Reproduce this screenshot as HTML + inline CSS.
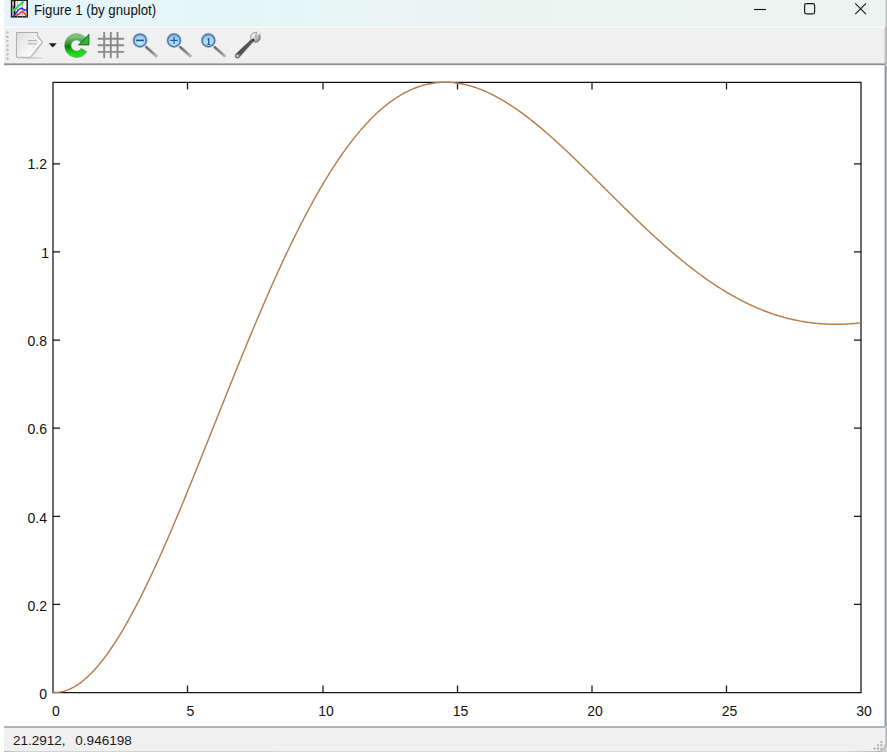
<!DOCTYPE html>
<html><head><meta charset="utf-8">
<style>
html,body{margin:0;padding:0;width:887px;height:752px;overflow:hidden;background:#fff;font-family:"Liberation Sans",sans-serif;}
.abs{position:absolute;}
#title{left:4px;top:0;width:881px;height:26px;background:linear-gradient(90deg,#e6f4fa 0%,#e5f6f7 30%,#e9f5f3 45%,#ebf4f1 80%,#ecf4f1 100%);}
#trow26{left:4px;top:26px;width:881px;height:1px;background:#f2f7f6;}
#ttext{left:33.7px;top:0.6px;font-size:14.4px;line-height:18px;color:#111;white-space:nowrap;transform:scaleX(0.92);transform-origin:0 0;}
#toolbar{left:4px;top:27px;width:880px;height:36px;background:#f0f0f0;border-top:1px solid #fafafa;box-sizing:border-box;}
#tbline1{left:4px;top:63px;width:881px;height:1px;background:#b4b4b4;}
#tbline2{left:4px;top:64px;width:881px;height:1px;background:#8a8e96;}
#tbline3{left:4px;top:65px;width:881px;height:1px;background:#e6e6e8;}
#rborder{left:885px;top:66px;width:1px;height:660px;background:#8c9098;}
#rb884{left:884px;top:66px;width:1px;height:660px;background:#d2d4d8;}
#rbtb{left:884px;top:27px;width:1px;height:36px;background:#dcdcdc;}
#rbtb2{left:885px;top:27px;width:1px;height:39px;background:#bcbcbc;}
#rbst{left:885px;top:726px;width:1px;height:20px;background:#d0d0d0;}
#rbti{left:885px;top:0;width:1px;height:27px;background:#d4d8d8;}
#outside{left:886px;top:0;width:1px;height:752px;background:linear-gradient(180deg,#c0c0c0 0px,#c0c0c0 27px,#bcbcbc 27px,#bcbcbc 66px,#b4b8b8 66px,#b4b8b8 726px,#b0b0b0 726px);}
#status{left:4px;top:726px;width:881px;height:25px;background:#f0f0f0;border-top:2px solid #b0b4b9;box-sizing:border-box;}
#stext{left:13px;top:733px;font-size:13.5px;color:#1a1a1a;white-space:nowrap;}
#bborder{left:4px;top:751px;width:882px;height:1px;background:linear-gradient(90deg,#b4b8bc 0px,#d0d2d4 14px,#d8d8d8 40%,#d8d8d8 96%,#b0b4b8 100%);}
.lbl{position:absolute;font-size:14px;color:#111;white-space:nowrap;line-height:15px;}
.xl{width:60px;text-align:center;}
.yl{width:47px;text-align:right;}
</style></head><body>
<div id="outside" class="abs"></div>
<div id="title" class="abs"></div><div id="trow26" class="abs"></div>
<svg class="abs" style="left:0;top:0" width="30" height="20">
 <rect x="11.6" y="0.2" width="15.6" height="16.6" fill="#f4f4f4" stroke="#1a1a1a" stroke-width="1.5"/>
 <path d="M17.5 1V16.5M22.5 1V16.5M12 13.8H27" stroke="#b0b0b0" stroke-width="1" fill="none"/>
 <path d="M12.5 6Q13.5 8 14.8 9.5" stroke="#e03030" stroke-width="1.5" fill="none"/>
 <path d="M14.5 0.5V16.8" stroke="#000" stroke-width="1.6"/>
 <path d="M15.5 14.5Q18 16 20 13Q22 10.5 24 12.5Q25.5 14 26.5 16.5" stroke="#f04040" stroke-width="1.6" fill="none"/>
 <path d="M12.3 11.7L23.6 1.3" stroke="#30dd50" stroke-width="2.2" fill="none"/>
 <path d="M13.5 16.6Q16 12 19.5 9Q21.5 7.5 23.5 9.5Q25 11 27 9.2" stroke="#3030f0" stroke-width="1.5" fill="none"/>
</svg>
<div id="ttext" class="abs">Figure 1 (by gnuplot)</div>
<svg class="abs" style="left:0;top:0" width="887" height="27">
 <path d="M754 9.5H766" stroke="#111" stroke-width="1.1"/>
 <rect x="804.6" y="3.6" width="10" height="10.2" rx="1.8" fill="none" stroke="#1a1a1a" stroke-width="1.2"/>
 <path d="M855.2 3.4L866 14.2M866 3.4L855.2 14.2" stroke="#1a1a1a" stroke-width="1.15"/>
</svg>
<div id="toolbar" class="abs"></div>
<div id="tbline1" class="abs"></div>
<div id="tbline2" class="abs"></div>
<div id="tbline3" class="abs"></div>
<div id="rborder" class="abs"></div><div id="rb884" class="abs"></div><div id="rbtb" class="abs"></div><div id="rbtb2" class="abs"></div><div id="rbst" class="abs"></div><div id="rbti" class="abs"></div>
<svg class="abs" style="left:0;top:0" width="270" height="64">

<defs>
 <radialGradient id="lensg" cx="0.5" cy="0.62" r="0.6"><stop offset="0" stop-color="#c8eefa"/><stop offset="0.65" stop-color="#98d6f0"/><stop offset="1" stop-color="#6aa6d8"/></radialGradient>
 <linearGradient id="hdl" x1="0" y1="0" x2="1" y2="1"><stop offset="0" stop-color="#6a6a6a"/><stop offset="0.6" stop-color="#888"/><stop offset="1" stop-color="#b4b4b4"/></linearGradient>
 <linearGradient id="pageg" x1="0" y1="0" x2="1" y2="1"><stop offset="0" stop-color="#dedede"/><stop offset="0.6" stop-color="#f6f6f6"/><stop offset="1" stop-color="#ffffff"/></linearGradient>
 <linearGradient id="greeng" x1="0" y1="0" x2="0" y2="1"><stop offset="0" stop-color="#7cc27c"/><stop offset="0.35" stop-color="#3a9a3a"/><stop offset="0.55" stop-color="#0c7c0c"/><stop offset="0.8" stop-color="#12b812"/><stop offset="1" stop-color="#1ee01e"/></linearGradient>
 <linearGradient id="wrg" x1="0" y1="0" x2="1" y2="1"><stop offset="0" stop-color="#333"/><stop offset="0.45" stop-color="#4a4a4a"/><stop offset="1" stop-color="#a8a8a8"/></linearGradient>
</defs>
<rect x="6.5" y="31.5" width="2" height="2" fill="#a6a6a6"/><rect x="7.3" y="32.3" width="1" height="1" fill="#fff" opacity=".6"/><rect x="6.5" y="35.9" width="2" height="2" fill="#a6a6a6"/><rect x="7.3" y="36.7" width="1" height="1" fill="#fff" opacity=".6"/><rect x="6.5" y="40.2" width="2" height="2" fill="#a6a6a6"/><rect x="7.3" y="41.0" width="1" height="1" fill="#fff" opacity=".6"/><rect x="6.5" y="44.6" width="2" height="2" fill="#a6a6a6"/><rect x="7.3" y="45.4" width="1" height="1" fill="#fff" opacity=".6"/><rect x="6.5" y="49.1" width="2" height="2" fill="#a6a6a6"/><rect x="7.3" y="49.9" width="1" height="1" fill="#fff" opacity=".6"/><rect x="6.5" y="53.4" width="2" height="2" fill="#a6a6a6"/><rect x="7.3" y="54.2" width="1" height="1" fill="#fff" opacity=".6"/><rect x="6.5" y="57.6" width="2" height="2" fill="#a6a6a6"/><rect x="7.3" y="58.4" width="1" height="1" fill="#fff" opacity=".6"/>
<ellipse cx="30" cy="58" rx="13" ry="1.2" fill="#d0d0d0" opacity=".8"/>
<path d="M16.5 32.5H37.5V35.2L42.5 42.3L36.5 50.3L30.5 57.3H16.5Z" fill="url(#pageg)" stroke="#b0b0b0" stroke-width="1.1"/>
<path d="M33.6 35.6L40.2 42.3L33.6 49.2" fill="none" stroke="#c8c8c8" stroke-width="3.4"/>
<path d="M33.6 35.6L40.2 42.3L33.6 49.2" fill="none" stroke="#fff" stroke-width="2"/>
<path d="M28 40.6H36.5M28 43.9H36" stroke="#b4b4b4" stroke-width="1.1"/>
<path d="M30.8 56.8L36.2 50.6" fill="none" stroke="#c4c4c4" stroke-width="1.6"/>
<path d="M48.8 43.2H56.8L52.8 47.6Z" fill="#1e1e1e"/>
<linearGradient id="tailg" x1="78" y1="0" x2="87" y2="0" gradientUnits="userSpaceOnUse"><stop offset="0" stop-color="#22d022" stop-opacity="1"/><stop offset="1" stop-color="#70d070" stop-opacity="0.1"/></linearGradient>
<path d="M84 50A8.7 8.7 0 1 1 84.7 42.6" fill="none" stroke="#0d6a0d" stroke-width="6.9" opacity=".5"/>
<path d="M84 50A8.7 8.7 0 1 1 84.7 42.6" fill="none" stroke="url(#greeng)" stroke-width="6.1"/>
<path d="M76.5 54.3A8.7 8.7 0 0 0 84.6 49.6" fill="none" stroke="url(#tailg)" stroke-width="6.3"/>
<path d="M78.4 44.9L89 34.3V44.9Z" fill="#2f9a2f" stroke="#146e14" stroke-width=".8" stroke-linejoin="round"/>
<path d="M81.2 44.1L88.2 36.8V44.1Z" fill="#3cb43c"/>
<g stroke="#8a8a8a" stroke-width="1.9"><path d="M104.2 32V58.3M110.8 32V58.3M117.5 32V58.3M97.8 38.8H124.1M97.8 45.2H124.1M97.8 51.9H124.1"/></g>
<g>
 <path d="M146.3 47.199999999999996L156.3 56.0" stroke="#c4c4c4" stroke-width="3.4" stroke-linecap="round" opacity=".8"/>
 <path d="M146.3 47.199999999999996L156.1 55.8" stroke="url(#hdl)" stroke-width="2.2" stroke-linecap="round"/>
 <circle cx="140" cy="40.4" r="7.6" fill="#a8aeb6" opacity=".6"/>
 <circle cx="140" cy="40.4" r="6.3" fill="url(#lensg)" stroke="#5272aa" stroke-width="1.4"/>
 <path d="M136.2 40.4H143.8" stroke="#1d4f9e" stroke-width="1.6"/>
</g>
<g>
 <path d="M180.3 47.199999999999996L190.3 56.0" stroke="#c4c4c4" stroke-width="3.4" stroke-linecap="round" opacity=".8"/>
 <path d="M180.3 47.199999999999996L190.1 55.8" stroke="url(#hdl)" stroke-width="2.2" stroke-linecap="round"/>
 <circle cx="174" cy="40.4" r="7.6" fill="#a8aeb6" opacity=".6"/>
 <circle cx="174" cy="40.4" r="6.3" fill="url(#lensg)" stroke="#5272aa" stroke-width="1.4"/>
 <path d="M170.3 40.4H177.7M174 36.7V44.1" stroke="#2456a4" stroke-width="1.25"/>
</g>
<g>
 <path d="M214.70000000000002 47.199999999999996L224.70000000000002 56.0" stroke="#c4c4c4" stroke-width="3.4" stroke-linecap="round" opacity=".8"/>
 <path d="M214.70000000000002 47.199999999999996L224.5 55.8" stroke="url(#hdl)" stroke-width="2.2" stroke-linecap="round"/>
 <circle cx="208.4" cy="40.4" r="7.6" fill="#a8aeb6" opacity=".6"/>
 <circle cx="208.4" cy="40.4" r="6.3" fill="url(#lensg)" stroke="#5272aa" stroke-width="1.4"/>
 <text x="208.4" y="45" font-size="10" font-family="Liberation Serif" font-weight="bold" text-anchor="middle" fill="#1d4f9e">1</text>
</g>
<radialGradient id="headg" cx="0.3" cy="0.3" r="0.8"><stop offset="0" stop-color="#f8f8f8"/><stop offset="0.5" stop-color="#c8c8c8"/><stop offset="1" stop-color="#707070"/></radialGradient>
<path d="M235.3 54.2L251.3 39.2L253.6 41.6L239.2 57.8Z" fill="url(#wrg)"/>
<circle cx="237.4" cy="55.8" r="2.6" fill="#7a7a7a"/>
<circle cx="237.4" cy="55.8" r="1.1" fill="#d8d8d8"/>
<circle cx="255.4" cy="37.4" r="5" fill="url(#headg)" stroke="#8a8a8a" stroke-width=".7"/>
<path d="M255.2 37.6L257.2 31.2Q259.5 31.6 261 33.2Z" fill="#f0f0f0"/>
<path d="M255.2 37.6L257.2 31.6M255.2 37.6L260.6 33.6" stroke="#a0a0a0" stroke-width=".9"/>
<circle cx="253.1" cy="40.1" r="1.4" fill="#2e2e2e"/>

</svg>
<svg class="abs" style="left:0;top:0" width="887" height="752">
 <g stroke="#141414" stroke-width="1.25" fill="none">
  <path d="M53.0 82.4H861.0V692.5H53.0Z"/>
  <path d="M187.5 692.5V685.5M187.5 82.4V89.4M323.0 692.5V685.5M323.0 82.4V89.4M457.5 692.5V685.5M457.5 82.4V89.4M592.0 692.5V685.5M592.0 82.4V89.4M726.5 692.5V685.5M726.5 82.4V89.4M53.0 604.38H60.0M861.0 604.38H854.0M53.0 516.26H60.0M861.0 516.26H854.0M53.0 428.14H60.0M861.0 428.14H854.0M53.0 340.02H60.0M861.0 340.02H854.0M53.0 251.90H60.0M861.0 251.90H854.0M53.0 163.78H60.0M861.0 163.78H854.0"/>
 </g>
 <polyline points="53.00,692.50 54.35,692.49 55.69,692.46 57.04,692.38 58.39,692.25 59.73,692.07 61.08,691.84 62.43,691.55 63.77,691.21 65.12,690.82 66.47,690.37 67.81,689.87 69.16,689.32 70.51,688.72 71.85,688.06 73.20,687.36 74.55,686.60 75.89,685.80 77.24,684.94 78.59,684.04 79.93,683.09 81.28,682.08 82.63,681.04 83.97,679.94 85.32,678.80 86.67,677.61 88.01,676.37 89.36,675.09 90.71,673.76 92.05,672.39 93.40,670.98 94.75,669.52 96.09,668.01 97.44,666.47 98.79,664.88 100.13,663.25 101.48,661.58 102.83,659.87 104.17,658.11 105.52,656.32 106.87,654.49 108.21,652.62 109.56,650.71 110.91,648.76 112.25,646.77 113.60,644.75 114.95,642.69 116.29,640.59 117.64,638.46 118.99,636.30 120.33,634.09 121.68,631.86 123.03,629.59 124.37,627.29 125.72,624.95 127.07,622.59 128.41,620.19 129.76,617.76 131.11,615.30 132.45,612.81 133.80,610.29 135.15,607.74 136.49,605.16 137.84,602.56 139.19,599.93 140.53,597.27 141.88,594.58 143.23,591.87 144.57,589.13 145.92,586.37 147.27,583.58 148.61,580.77 149.96,577.93 151.31,575.07 152.65,572.19 154.00,569.29 155.35,566.37 156.69,563.42 158.04,560.46 159.39,557.47 160.73,554.47 162.08,551.45 163.43,548.40 164.77,545.34 166.12,542.27 167.47,539.17 168.81,536.06 170.16,532.94 171.51,529.80 172.85,526.64 174.20,523.47 175.55,520.28 176.89,517.09 178.24,513.87 179.59,510.65 180.93,507.42 182.28,504.17 183.63,500.91 184.97,497.64 186.32,494.37 187.67,491.08 189.01,487.78 190.36,484.48 191.71,481.16 193.05,477.84 194.40,474.51 195.75,471.18 197.09,467.84 198.44,464.49 199.79,461.14 201.13,457.78 202.48,454.42 203.83,451.05 205.17,447.69 206.52,444.31 207.87,440.94 209.21,437.56 210.56,434.19 211.91,430.81 213.25,427.43 214.60,424.05 215.95,420.67 217.29,417.29 218.64,413.91 219.99,410.53 221.33,407.15 222.68,403.78 224.03,400.41 225.37,397.04 226.72,393.68 228.07,390.32 229.41,386.96 230.76,383.61 232.11,380.26 233.45,376.92 234.80,373.58 236.15,370.25 237.49,366.93 238.84,363.62 240.19,360.31 241.53,357.01 242.88,353.71 244.23,350.43 245.57,347.15 246.92,343.89 248.27,340.63 249.61,337.38 250.96,334.15 252.31,330.92 253.65,327.71 255.00,324.50 256.35,321.31 257.69,318.13 259.04,314.96 260.39,311.81 261.73,308.66 263.08,305.53 264.43,302.42 265.77,299.32 267.12,296.23 268.47,293.16 269.81,290.10 271.16,287.05 272.51,284.03 273.85,281.01 275.20,278.02 276.55,275.04 277.89,272.07 279.24,269.13 280.59,266.20 281.93,263.28 283.28,260.39 284.63,257.51 285.97,254.65 287.32,251.81 288.67,248.99 290.01,246.18 291.36,243.40 292.71,240.63 294.05,237.89 295.40,235.16 296.75,232.45 298.09,229.77 299.44,227.10 300.79,224.45 302.13,221.83 303.48,219.23 304.83,216.64 306.17,214.08 307.52,211.54 308.87,209.02 310.21,206.53 311.56,204.05 312.91,201.60 314.25,199.17 315.60,196.77 316.95,194.38 318.29,192.02 319.64,189.69 320.99,187.37 322.33,185.08 323.68,182.81 325.03,180.57 326.37,178.35 327.72,176.15 329.07,173.98 330.41,171.83 331.76,169.71 333.11,167.61 334.45,165.53 335.80,163.48 337.15,161.46 338.49,159.46 339.84,157.48 341.19,155.53 342.53,153.61 343.88,151.70 345.23,149.83 346.57,147.98 347.92,146.16 349.27,144.36 350.61,142.58 351.96,140.84 353.31,139.11 354.65,137.42 356.00,135.75 357.35,134.10 358.69,132.49 360.04,130.89 361.39,129.33 362.73,127.79 364.08,126.27 365.43,124.78 366.77,123.32 368.12,121.88 369.47,120.47 370.81,119.09 372.16,117.73 373.51,116.40 374.85,115.09 376.20,113.81 377.55,112.56 378.89,111.33 380.24,110.13 381.59,108.96 382.93,107.81 384.28,106.69 385.63,105.59 386.97,104.52 388.32,103.47 389.67,102.45 391.01,101.46 392.36,100.50 393.71,99.55 395.05,98.64 396.40,97.75 397.75,96.89 399.09,96.05 400.44,95.24 401.79,94.45 403.13,93.69 404.48,92.95 405.83,92.24 407.17,91.55 408.52,90.89 409.87,90.26 411.21,89.65 412.56,89.06 413.91,88.50 415.25,87.97 416.60,87.46 417.95,86.97 419.29,86.51 420.64,86.07 421.99,85.66 423.33,85.27 424.68,84.91 426.03,84.57 427.37,84.25 428.72,83.96 430.07,83.69 431.41,83.44 432.76,83.22 434.11,83.02 435.45,82.85 436.80,82.69 438.15,82.56 439.49,82.46 440.84,82.37 442.19,82.31 443.53,82.27 444.88,82.26 446.23,82.26 447.57,82.29 448.92,82.34 450.27,82.41 451.61,82.50 452.96,82.61 454.31,82.75 455.65,82.91 457.00,83.08 458.35,83.28 459.69,83.50 461.04,83.74 462.39,84.00 463.73,84.28 465.08,84.58 466.43,84.90 467.77,85.23 469.12,85.59 470.47,85.97 471.81,86.37 473.16,86.78 474.51,87.22 475.85,87.67 477.20,88.14 478.55,88.63 479.89,89.14 481.24,89.67 482.59,90.21 483.93,90.77 485.28,91.35 486.63,91.95 487.97,92.56 489.32,93.19 490.67,93.84 492.01,94.50 493.36,95.18 494.71,95.87 496.05,96.59 497.40,97.31 498.75,98.05 500.09,98.81 501.44,99.58 502.79,100.37 504.13,101.17 505.48,101.99 506.83,102.82 508.17,103.67 509.52,104.53 510.87,105.40 512.21,106.29 513.56,107.19 514.91,108.10 516.25,109.03 517.60,109.96 518.95,110.91 520.29,111.88 521.64,112.85 522.99,113.84 524.33,114.84 525.68,115.85 527.03,116.87 528.37,117.91 529.72,118.95 531.07,120.01 532.41,121.07 533.76,122.15 535.11,123.23 536.45,124.33 537.80,125.43 539.15,126.55 540.49,127.67 541.84,128.81 543.19,129.95 544.53,131.10 545.88,132.26 547.23,133.43 548.57,134.60 549.92,135.79 551.27,136.98 552.61,138.18 553.96,139.39 555.31,140.60 556.65,141.82 558.00,143.05 559.35,144.28 560.69,145.52 562.04,146.77 563.39,148.02 564.73,149.27 566.08,150.54 567.43,151.81 568.77,153.08 570.12,154.36 571.47,155.64 572.81,156.93 574.16,158.22 575.51,159.52 576.85,160.82 578.20,162.12 579.55,163.43 580.89,164.74 582.24,166.05 583.59,167.37 584.93,168.69 586.28,170.01 587.63,171.34 588.97,172.67 590.32,174.00 591.67,175.33 593.01,176.66 594.36,178.00 595.71,179.33 597.05,180.67 598.40,182.01 599.75,183.35 601.09,184.69 602.44,186.03 603.79,187.37 605.13,188.71 606.48,190.05 607.83,191.39 609.17,192.73 610.52,194.07 611.87,195.41 613.21,196.74 614.56,198.08 615.91,199.42 617.25,200.75 618.60,202.08 619.95,203.42 621.29,204.75 622.64,206.07 623.99,207.40 625.33,208.72 626.68,210.04 628.03,211.36 629.37,212.67 630.72,213.99 632.07,215.30 633.41,216.60 634.76,217.90 636.11,219.20 637.45,220.50 638.80,221.79 640.15,223.08 641.49,224.36 642.84,225.64 644.19,226.92 645.53,228.19 646.88,229.45 648.23,230.71 649.57,231.97 650.92,233.22 652.27,234.47 653.61,235.71 654.96,236.95 656.31,238.18 657.65,239.40 659.00,240.62 660.35,241.83 661.69,243.04 663.04,244.24 664.39,245.44 665.73,246.62 667.08,247.81 668.43,248.98 669.77,250.15 671.12,251.31 672.47,252.47 673.81,253.62 675.16,254.76 676.51,255.89 677.85,257.02 679.20,258.14 680.55,259.25 681.89,260.35 683.24,261.45 684.59,262.54 685.93,263.62 687.28,264.70 688.63,265.76 689.97,266.82 691.32,267.87 692.67,268.91 694.01,269.94 695.36,270.97 696.71,271.98 698.05,272.99 699.40,273.99 700.75,274.98 702.09,275.96 703.44,276.93 704.79,277.89 706.13,278.85 707.48,279.79 708.83,280.73 710.17,281.66 711.52,282.58 712.87,283.48 714.21,284.38 715.56,285.27 716.91,286.15 718.25,287.03 719.60,287.89 720.95,288.74 722.29,289.58 723.64,290.41 724.99,291.24 726.33,292.05 727.68,292.85 729.03,293.65 730.37,294.43 731.72,295.20 733.07,295.97 734.41,296.72 735.76,297.47 737.11,298.20 738.45,298.92 739.80,299.64 741.15,300.34 742.49,301.03 743.84,301.72 745.19,302.39 746.53,303.05 747.88,303.70 749.23,304.34 750.57,304.98 751.92,305.60 753.27,306.21 754.61,306.81 755.96,307.40 757.31,307.98 758.65,308.55 760.00,309.11 761.35,309.66 762.69,310.20 764.04,310.73 765.39,311.24 766.73,311.75 768.08,312.25 769.43,312.73 770.77,313.21 772.12,313.68 773.47,314.13 774.81,314.58 776.16,315.01 777.51,315.44 778.85,315.85 780.20,316.26 781.55,316.65 782.89,317.03 784.24,317.41 785.59,317.77 786.93,318.12 788.28,318.46 789.63,318.80 790.97,319.12 792.32,319.43 793.67,319.73 795.01,320.03 796.36,320.31 797.71,320.58 799.05,320.84 800.40,321.09 801.75,321.34 803.09,321.57 804.44,321.79 805.79,322.00 807.13,322.20 808.48,322.40 809.83,322.58 811.17,322.75 812.52,322.92 813.87,323.07 815.21,323.22 816.56,323.35 817.91,323.48 819.25,323.59 820.60,323.70 821.95,323.80 823.29,323.89 824.64,323.96 825.99,324.03 827.33,324.09 828.68,324.15 830.03,324.19 831.37,324.22 832.72,324.25 834.07,324.26 835.41,324.27 836.76,324.27 838.11,324.26 839.45,324.24 840.80,324.21 842.15,324.17 843.49,324.13 844.84,324.07 846.19,324.01 847.53,323.94 848.88,323.86 850.23,323.78 851.57,323.68 852.92,323.58 854.27,323.47 855.61,323.35 856.96,323.22 858.31,323.09 859.65,322.94 861.00,322.79" fill="none" stroke="#b47f4c" stroke-width="1.45"/>
</svg>
<div class="lbl xl" style="left:26.0px;top:703.5px">0</div>
<div class="lbl xl" style="left:160.5px;top:703.5px">5</div>
<div class="lbl xl" style="left:296.0px;top:703.5px">10</div>
<div class="lbl xl" style="left:430.5px;top:703.5px">15</div>
<div class="lbl xl" style="left:565.0px;top:703.5px">20</div>
<div class="lbl xl" style="left:699.5px;top:703.5px">25</div>
<div class="lbl xl" style="left:834.0px;top:703.5px">30</div>
<div class="lbl yl" style="left:0px;top:686.7px">0</div>
<div class="lbl yl" style="left:0px;top:598.6px">0.2</div>
<div class="lbl yl" style="left:0px;top:510.5px">0.4</div>
<div class="lbl yl" style="left:0px;top:422.3px">0.6</div>
<div class="lbl yl" style="left:0px;top:334.2px">0.8</div>
<div class="lbl yl" style="left:2px;top:246.1px">1</div>
<div class="lbl yl" style="left:0px;top:157.0px">1.2</div>
<div id="status" class="abs"></div><div id="bborder" class="abs"></div>
<svg class="abs" style="left:860px;top:730px" width="27" height="22">
 <g fill="#b2b2b2"><rect x="20.3" y="11" width="2" height="2"/><rect x="17" y="14.2" width="2" height="2"/><rect x="20.3" y="14.2" width="2" height="2"/><rect x="13.7" y="17.5" width="2" height="2"/><rect x="17" y="17.5" width="2" height="2"/><rect x="20.3" y="17.5" width="2" height="2"/></g>
 <path d="M27 13V22H17.5A7.8 7.8 0 0 0 25.5 14V13Z" fill="#cdcdcd"/>
 <path d="M17.5 21.5A7.6 7.6 0 0 0 25.5 13.5" fill="none" stroke="#a8acb0" stroke-width="1.1"/>
</svg>
<div id="stext" class="abs">21.2912,<span style="display:inline-block;width:9.8px"></span>0.946198</div>
</body></html>
